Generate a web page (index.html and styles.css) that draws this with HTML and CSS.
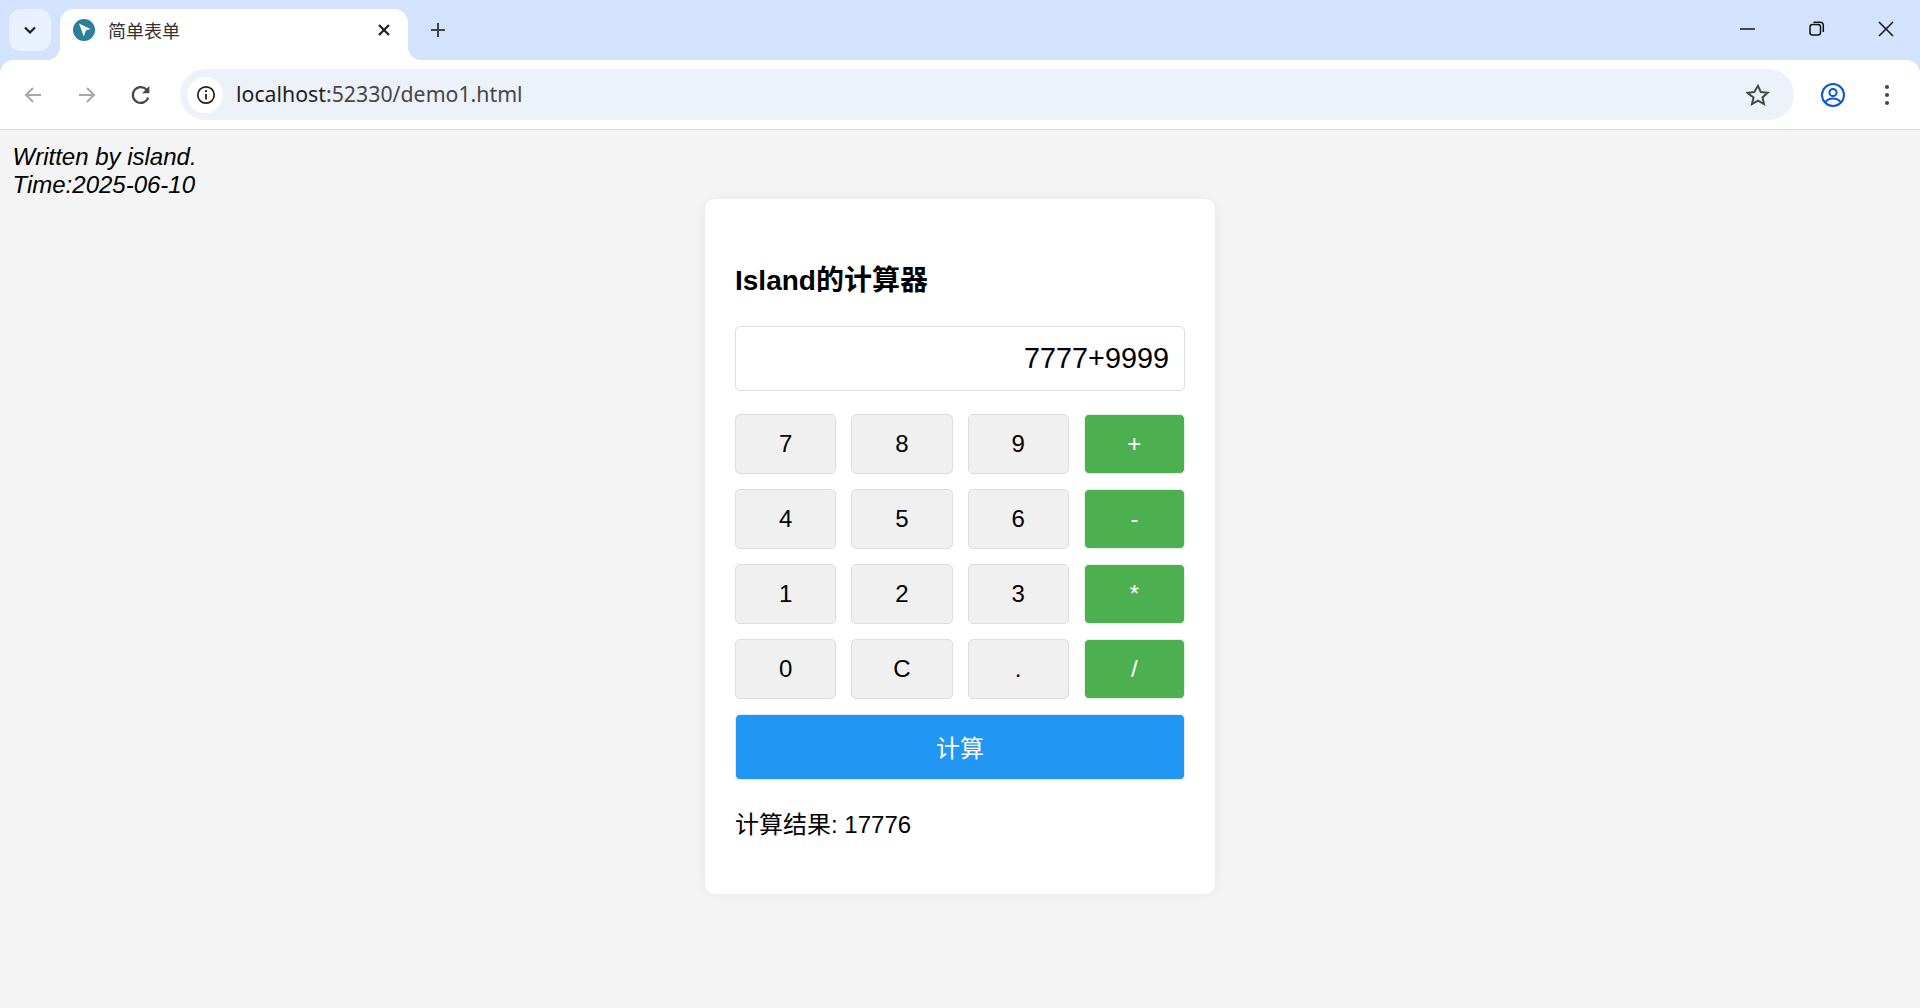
FILE: index.html
```html
<!DOCTYPE html>
<html lang="zh-CN">
<head>
    <meta charset="UTF-8">
    <title>简单表单</title>
    <link rel="stylesheet" href="styles.css">
</head>
<body>
    <div class="tabstrip">
        <div class="tab-search">
            <svg width="16" height="16" viewBox="0 0 16 16"><path d="M3 5.500 8 10.500l5-5" fill="none" stroke="#1f1f1f" stroke-width="2.200"/></svg>
        </div>
        <div class="tab">
            <svg class="favicon" width="22" height="22" viewBox="0 0 22 22"><circle cx="11" cy="11" r="11" fill="#2b7f99"/><path d="M6 4.500 17.500 10l-4.700 1.500L10.800 17.500z" fill="#fff"/></svg>
            <span class="tab-title">简单表单</span>
            <svg class="tab-close" width="14" height="14" viewBox="0 0 14 14"><path d="M2 2l10 10M12 2 2 12" stroke="#1f1f1f" stroke-width="2.200"/></svg>
        </div>
        <svg class="new-tab" width="18" height="18" viewBox="0 0 18 18"><path d="M9 2v14M2 9h14" stroke="#444" stroke-width="2"/></svg>
        <div class="win-controls">
            <svg width="16" height="16" viewBox="0 0 16 16"><path d="M0 8h15" stroke="#111" stroke-width="1.500"/></svg>
            <svg width="16" height="16" viewBox="0 0 16 16"><rect x="1" y="3.500" width="10.500" height="10.500" rx="2.500" fill="none" stroke="#111" stroke-width="1.500"/><path d="M4.500 1.200h6.800a3 3 0 0 1 3 3v6.800" fill="none" stroke="#111" stroke-width="1.500"/></svg>
            <svg width="16" height="16" viewBox="0 0 16 16"><path d="M1 1l14 14M15 1 1 15" stroke="#111" stroke-width="1.500"/></svg>
        </div>
    </div>

    <div class="toolbar">
        <div class="nav-btn">
            <svg width="20" height="20" viewBox="0 0 20 20"><path d="M18 10H3M10 3l-7 7 7 7" fill="none" stroke="#a8a8a8" stroke-width="2"/></svg>
        </div>
        <div class="nav-btn">
            <svg width="20" height="20" viewBox="0 0 20 20"><path d="M2 10h15M10 3l7 7-7 7" fill="none" stroke="#a8a8a8" stroke-width="2"/></svg>
        </div>
        <div class="nav-btn">
            <svg width="22" height="22" viewBox="0 0 20 20"><path d="M16.600 12.400A7.200 7.200 0 1 1 15 5l1.600 1.700" fill="none" stroke="#474747" stroke-width="2"/><path d="M17.600 1.800v6.600H11z" fill="#474747"/></svg>
        </div>
        <div class="omnibox">
            <div class="site-info">
                <svg width="20" height="20" viewBox="0 0 20 20"><circle cx="10" cy="10" r="8.200" fill="none" stroke="#1f1f1f" stroke-width="1.700"/><path d="M10 9v5.500" stroke="#1f1f1f" stroke-width="1.800"/><circle cx="10" cy="6.200" r="1.100" fill="#1f1f1f"/></svg>
            </div>
            <div class="url">localhost<span class="url-path">:52330/demo1.html</span></div>
            <svg class="star" width="24" height="24" viewBox="0 0 24 24"><path d="M12 2.800l2.800 6.300 6.800.7-5.100 4.600 1.500 6.700-6-3.500-6 3.500 1.500-6.700L1.400 9.800l6.800-.7z" fill="none" stroke="#474747" stroke-width="2"/></svg>
        </div>
        <svg class="profile" width="24" height="24" viewBox="0 0 24 24"><circle cx="12" cy="12" r="11" fill="none" stroke="#0b57d0" stroke-width="2"/><circle cx="12" cy="9.500" r="3.600" fill="none" stroke="#0b57d0" stroke-width="2"/><path d="M4.500 19c1.800-2.600 4.500-3.600 7.500-3.600s5.700 1 7.500 3.600" fill="none" stroke="#0b57d0" stroke-width="2"/></svg>
        <svg class="menu" width="6" height="24" viewBox="0 0 6 24"><circle cx="3" cy="4" r="2.100" fill="#474747"/><circle cx="3" cy="12" r="2.100" fill="#474747"/><circle cx="3" cy="20" r="2.100" fill="#474747"/></svg>
    </div>

    <div class="page">
        <div class="credit">Written by island.<br>Time:2025-06-10</div>
        <div class="calculator">
            <h2>Island的计算器</h2>
            <div class="display">7777+9999</div>
            <div class="keys">
                <div class="key">7</div>
                <div class="key">8</div>
                <div class="key">9</div>
                <div class="key op">+</div>
                <div class="key">4</div>
                <div class="key">5</div>
                <div class="key">6</div>
                <div class="key op">-</div>
                <div class="key">1</div>
                <div class="key">2</div>
                <div class="key">3</div>
                <div class="key op">*</div>
                <div class="key">0</div>
                <div class="key">C</div>
                <div class="key">.</div>
                <div class="key op">/</div>
            </div>
            <div class="equals">计算</div>
            <div class="result">计算结果: 17776</div>
        </div>
    </div>
</body>
</html>
```

FILE: styles.css
```css
html,body{height:100%;}
body{
    display:flex;
    flex-direction:column;
    margin:0;
    overflow:hidden;
    background-color:#d3e3fd;
    font-family:"Liberation Sans","Noto Sans CJK SC",sans-serif;
}

/* tab strip */
.tabstrip{
    display:flex;
    align-items:flex-end;
    flex:none;
    height:60px;
}
.tab-search{
    display:flex;
    align-items:center;
    justify-content:center;
    align-self:flex-start;
    width:42px;
    height:42px;
    margin:9px 9px 0;
    border-radius:12px;
    background-color:#e9f0fe;
}
.tab{
    position:relative;
    display:flex;
    align-items:center;
    width:348px;
    height:51px;
    padding:0 17px 9px 13px;
    box-sizing:border-box;
    border-radius:14px 14px 0 0;
    background-color:#fff;
}
.tab::before,.tab::after{
    content:"";
    position:absolute;
    bottom:0;
    width:14px;
    height:14px;
}
.tab::before{
    left:-14px;
    background:radial-gradient(circle at 0 0,transparent 14px,#fff 14.5px);
}
.tab::after{
    right:-14px;
    background:radial-gradient(circle at 100% 0,transparent 14px,#fff 14.5px);
}
.tab-title{
    flex:1;
    margin-left:13px;
    color:#333;
    font-size:18px;
}
.new-tab{
    align-self:flex-start;
    margin:21px 0 0 21px;
}
.win-controls{
    display:flex;
    align-self:flex-start;
    gap:53px;
    margin:21px 26px 0 auto;
}

/* toolbar */
.toolbar{
    display:flex;
    align-items:center;
    flex:none;
    height:70px;
    box-sizing:border-box;
    border-bottom:1px solid #dcdcdc;
    border-radius:14px 14px 0 0;
    background-color:#fff;
}
.nav-btn{
    display:flex;
    align-items:center;
    justify-content:center;
    width:54px;
    height:51px;
}
.nav-btn:first-child{margin-left:6px;}
.omnibox{
    display:flex;
    align-items:center;
    width:1614px;
    height:51px;
    margin-left:12px;
    padding:0 24px 0 7px;
    box-sizing:border-box;
    border-radius:26px;
    background-color:#edf2fa;
}
.site-info{
    display:flex;
    align-items:center;
    justify-content:center;
    width:36px;
    height:36px;
    padding-left:1px;
    box-sizing:border-box;
    border-radius:50%;
    background-color:#fff;
}
.url{
    flex:1;
    margin:0 0 2px 13px;
    color:#1f1f1f;
    font-family:"Noto Sans",sans-serif;
    font-size:21.3px;
}
.url-path{color:#474747;}
.profile{margin-left:27px;}
.menu{margin-left:39px;}

/* page */
.page{
    flex:1;
    padding:13px 12.5px 0;
    background-color:#f4f4f4;
}
.credit{
    color:#000;
    font-size:24px;
    font-style:italic;
    line-height:28px;
}
.calculator{
    width:510px;
    margin:0 auto;
    padding:30px;
    box-sizing:border-box;
    border-radius:10px;
    background-color:#fff;
    box-shadow:0 0 12px rgba(0,0,0,.06);
}
.calculator h2{
    margin:32px 0 25px;
    color:#000;
    font-size:28px;
    line-height:40px;
}
.display{
    height:65px;
    padding-right:15px;
    box-sizing:border-box;
    border:1px solid #ddd;
    border-radius:5px;
    color:#000;
    font-size:28.8px;
    line-height:62px;
    text-align:right;
}
.keys{
    display:grid;
    grid-template-columns:repeat(4,1fr);
    gap:15px;
    margin-top:23px;
}
.key{
    height:60px;
    box-sizing:border-box;
    border:1px solid #ddd;
    border-radius:5px;
    background-color:#f0f0f0;
    color:#000;
    font-size:24px;
    line-height:58px;
    text-align:center;
}
.key.op{
    border-color:#e4efe4;
    background-color:#4caf50;
    color:#fff;
}
.equals{
    height:66px;
    margin-top:15px;
    box-sizing:border-box;
    border:1px solid #dde8f2;
    border-radius:5px;
    background-color:#2196f3;
    color:#fff;
    font-size:24px;
    line-height:67px;
    text-align:center;
}
.result{
    margin:31px 0 25px;
    color:#000;
    font-size:24px;
    line-height:28px;
}
```
